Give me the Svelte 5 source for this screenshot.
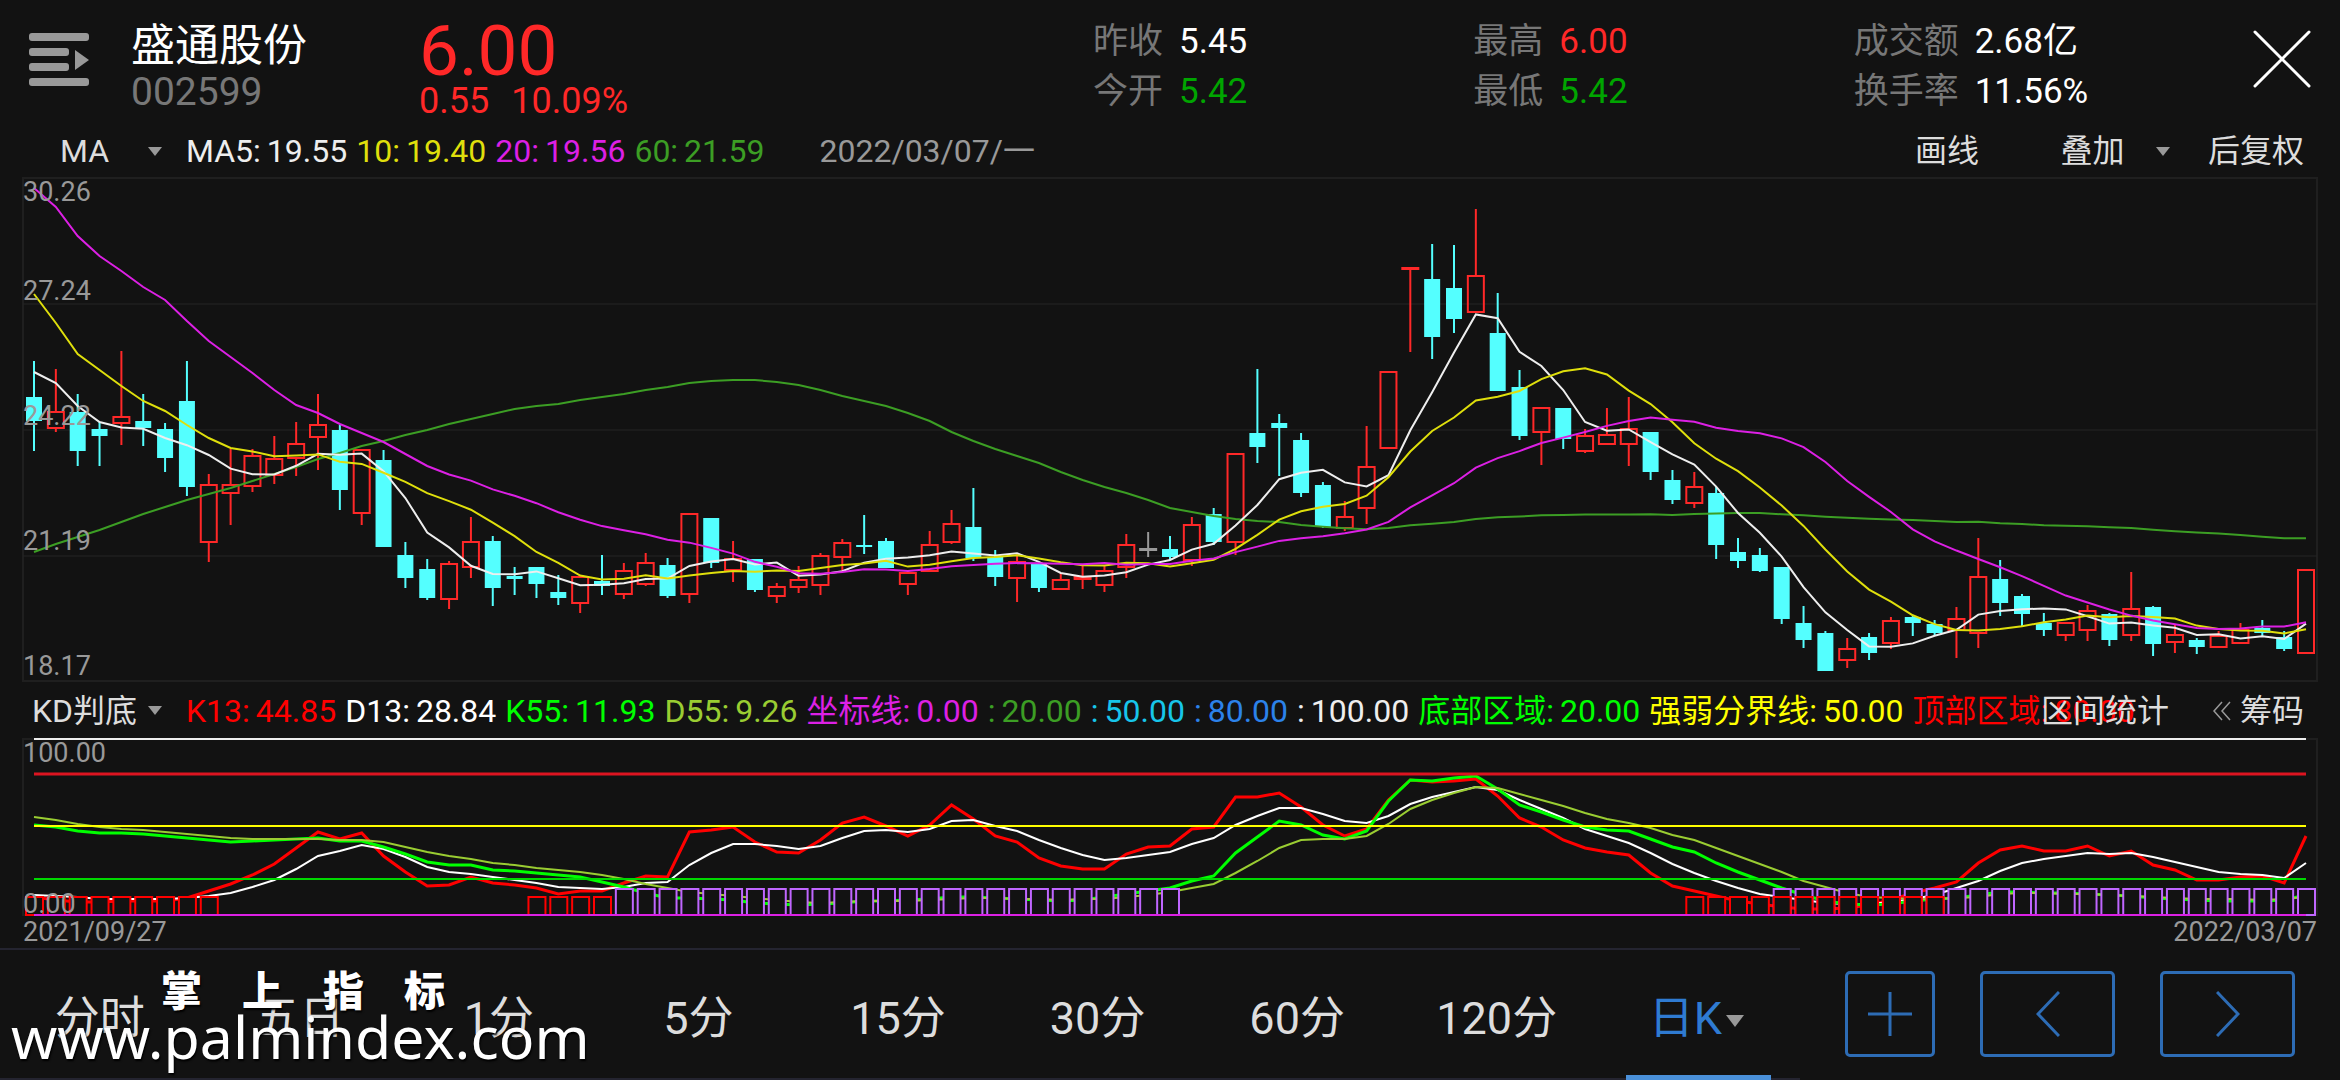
<script>
  let width = 2294;
  let activeTab = '日K';
  let mainIndicator = 'MA';
  let subIndicator = 'KD判底';

  const tabs = ['分时', '五日', '1分', '5分', '15分', '30分', '60分', '120分', '日K'];

  const stats = [
    { label: '昨收', value: '5.45', tone: 'plain' },
    { label: '最高', value: '6.00', tone: 'up' },
    { label: '成交额', value: '2.68亿', tone: 'plain' },
    { label: '今开', value: '5.42', tone: 'down' },
    { label: '最低', value: '5.42', tone: 'down' },
    { label: '换手率', value: '11.56%', tone: 'plain' }
  ];

  const maLegend = [
    { label: 'MA5:', value: '19.55', tone: 'white' },
    { label: '10:', value: '19.40', tone: 'gold' },
    { label: '20:', value: '19.56', tone: 'magenta' },
    { label: '60:', value: '21.59', tone: 'leaf' }
  ];

  const kdLegend = [
    { label: 'K13:', value: '44.85', tone: 'red' },
    { label: 'D13:', value: '28.84', tone: 'pure' },
    { label: 'K55:', value: '11.93', tone: 'lime' },
    { label: 'D55:', value: '9.26', tone: 'olive' },
    { label: '坐标线:', value: '0.00', tone: 'magenta' },
    { label: ':', value: '20.00', tone: 'leaf' },
    { label: ':', value: '50.00', tone: 'cyan' },
    { label: ':', value: '80.00', tone: 'blue' },
    { label: ':', value: '100.00', tone: 'white' },
    { label: '底部区域:', value: '20.00', tone: 'lime' },
    { label: '强弱分界线:', value: '50.00', tone: 'yellow' },
    { label: '顶部区域:', value: '80.00', tone: 'red' }
  ];

  // type, high, body top, body bottom, low (u = up, d = down, f = flat)
  const candles = `
    d 183 219 243 273,u 191 234 250 254,d 216 234 273 288,d 244 251 258 288,u 173 239 245 267,
    d 216 243 250 268,d 245 251 280 294,d 183 223 309 318,u 296 307 364 384,u 271 307 315 347,
    u 271 278 308 314,u 258 281 297 306,u 244 266 280 298,u 216 247 259 292,d 247 252 312 332,
    u 272 272 335 347,d 272 282 369 369,d 364 377 400 410,d 381 391 420 422,u 383 386 421 431,
    u 339 364 389 400,d 358 363 410 428,d 389 398 401 417,d 389 389 406 420,d 397 414 420 427,
    u 399 399 425 435,d 377 403 408 417,u 385 393 416 421,u 375 385 406 408,d 380 387 418 420,
    u 336 336 416 425,d 340 340 385 390,u 363 381 392 404,d 381 381 412 414,u 405 409 418 425,
    u 388 402 409 415,u 375 378 407 417,u 361 365 379 394,d 337 367 369 376,d 360 363 390 390,
    u 392 395 406 417,u 353 367 393 393,u 332 346 364 366,d 310 349 380 383,d 372 379 399 408,
    u 376 384 400 424,d 385 385 410 414,u 395 402 411 412,u 387 399 401 411,u 387 393 407 414,
    u 356 367 389 400,f 354 371 372 379,d 358 371 379 382,u 339 347 382 388,d 330 336 364 367,
    u 276 276 364 377,d 191 255 269 285,d 236 245 250 298,d 255 262 315 319,d 304 307 349 350,
    u 323 339 350 353,u 248 289 330 346,u 194 194 270 270,u 90 90 91 174,d 66 101 159 181,
    d 67 110 141 155,u 31 98 134 134,d 115 155 213 213,d 192 209 258 262,u 230 230 254 287,
    d 230 230 261 271,u 251 258 273 275,u 230 257 266 266,u 219 251 266 288,d 254 254 294 302,
    d 292 302 322 326,u 294 309 325 330,d 309 315 367 381,d 360 374 383 390,d 370 377 393 394,
    d 389 389 441 446,d 428 445 462 470,d 453 455 493 493,u 460 471 482 490,d 455 459 475 482,
    u 439 443 465 471,d 437 439 445 458,d 442 446 455 458,u 429 441 452 480,u 360 399 455 470,
    d 382 401 425 438,d 416 418 436 448,d 435 445 452 458,u 444 445 457 463,u 427 433 452 463,
    d 435 436 462 468,u 394 431 457 463,d 428 429 466 478,u 446 457 464 475,d 460 462 469 476,
    u 453 458 469 470,u 445 452 465 466,d 442 450 455 458,d 453 459 471 473,u 392 392 475 475`
    .trim()
    .split(',')
    .map((row) => {
      const [type, high, top, bottom, low] = row.trim().split(' ');
      return { type, high: +high, top: +top, bottom: +bottom, low: +low };
    });

  const closes = candles.map((c) => (c.type === 'u' ? c.top : c.bottom));

  // the first n - 1 points need days before the window, so they come as a seed
  function average(n, seed) {
    return closes.map((_, i) => {
      if (i < seed.length) return seed[i];
      const days = closes.slice(i - n + 1, i + 1);
      return days.reduce((sum, y) => sum + y, 0) / n;
    });
  }

  const averages = [
    { tone: 'leaf', points: average(60, [
      374, 366, 359, 352, 344, 336, 329, 322, 316, 310, 303, 296, 289, 281, 275, 268, 263, 257, 252, 246,
      241, 236, 231, 228, 226, 222, 219, 216, 212, 209, 205, 203, 202, 202, 204, 207, 212, 218, 223, 228,
      235, 243, 254, 263, 271, 278, 285, 294, 302, 309, 315, 322, 330, 334, 338, 341, 343, 344, 347
    ]) },
    { tone: 'white', points: average(5, [194, 205, 228, 244]) },
    { tone: 'gold', points: average(10, [116, 145, 176, 192, 208, 223, 233, 247, 260]) },
    { tone: 'magenta', points: average(20, [10, 29, 58, 78, 93, 109, 122, 143, 163, 179, 195, 212, 227, 235, 246, 255, 264, 276, 288]) }
  ];

  const kdLines = [
    { tone: 'red', thick: true, points: [
      158, 161, 163, 163, 162, 162, 162, 159, 152, 145, 136, 125, 109, 93, 100, 94, 117, 133, 147, 146,
      138, 144, 146, 149, 155, 152, 152, 144, 137, 138, 93, 91, 88, 103, 113, 114, 101, 84, 78, 87,
      97, 86, 66, 80, 97, 103, 119, 127, 130, 130, 115, 108, 107, 90, 88, 58, 58, 54, 68, 86,
      97, 90, 61, 41, 43, 42, 40, 57, 79, 88, 101, 109, 113, 116, 134, 147, 152, 157, 162, 165,
      168, 170, 170, 169, 166, 161, 154, 149, 143, 124, 111, 107, 112, 112, 107, 117, 112, 126, 131, 141,
      141, 138, 137, 144, 97
    ] },
    { tone: 'pure', thick: false, points: [
      156, 157, 158, 160, 160, 160, 160, 159, 157, 154, 148, 141, 130, 117, 112, 106, 110, 118, 128, 133,
      135, 138, 141, 144, 148, 149, 150, 148, 144, 143, 126, 114, 105, 105, 107, 110, 107, 99, 92, 91,
      93, 90, 82, 81, 87, 92, 101, 109, 116, 121, 119, 116, 113, 105, 99, 86, 77, 69, 69, 75,
      82, 84, 77, 65, 58, 53, 48, 51, 61, 70, 79, 90, 97, 104, 114, 125, 134, 142, 149, 155,
      158, 161, 164, 165, 165, 163, 160, 156, 149, 142, 132, 124, 120, 117, 114, 115, 114, 118, 123, 128,
      133, 135, 136, 139, 124
    ] },
    { tone: 'lime', thick: true, points: [
      86, 88, 92, 94, 94, 95, 97, 99, 101, 103, 102, 101, 100, 99, 102, 102, 108, 115, 123, 126,
      126, 131, 132, 134, 136, 138, 143, 148, 154, 159, 159, 160, 161, 164, 165, 166, 165, 164, 162, 162,
      161, 160, 158, 158, 159, 160, 161, 162, 161, 158, 155, 152, 149, 142, 137, 114, 98, 82, 86, 96,
      100, 92, 62, 41, 42, 39, 37, 50, 66, 73, 81, 88, 91, 92, 100, 108, 113, 124, 133, 141,
      149, 156, 162, 165, 166, 165, 162, 160, 159, 156, 153, 153, 154, 154, 155, 156, 157, 159, 160, 161,
      162, 162, 162, 161, 156
    ] },
    { tone: 'olive', thick: false, points: [
      78, 81, 85, 88, 90, 91, 93, 95, 97, 99, 100, 100, 100, 100, 101, 101, 103, 108, 113, 117,
      120, 124, 126, 129, 131, 133, 136, 140, 145, 149, 153, 155, 157, 159, 161, 163, 164, 163, 162, 162,
      162, 161, 160, 159, 159, 160, 160, 161, 160, 160, 158, 156, 153, 149, 145, 134, 122, 109, 101, 100,
      100, 97, 85, 70, 61, 54, 48, 49, 55, 61, 67, 74, 80, 84, 89, 96, 101, 109, 117, 125,
      133, 142, 148, 154, 158, 159, 160, 160, 159, 158, 155, 154, 154, 155, 155, 156, 157, 158, 159, 160,
      160, 160, 161, 160, 158
    ] }
  ];

  const levels = [
    { y: 35, tone: 'top' },
    { y: 87, tone: 'yellow' },
    { y: 140, tone: 'bottom' }
  ];

  const range = (from, to) => Array.from({ length: to - from + 1 }, (_, i) => from + i);
  const purpleBars = [...range(27, 52), ...range(80, 104)];
  const redBars = [...range(0, 8), ...range(23, 26), ...range(76, 87)];

  const prices = [
    { text: '30.26', y: 23 },
    { text: '27.24', y: 122 },
    { text: '24.22', y: 247 },
    { text: '21.19', y: 372 },
    { text: '18.17', y: 497 }
  ];

  $: step = (width - 22) / (candles.length - 1);
  $: x = (i) => 11 + i * step;
  $: path = (points) => points.map((y, i) => `${x(i)},${y}`).join(' ');
</script>

<main>
  <header>
    <button class="menu" aria-label="列表">
      <svg width="60" height="54" viewBox="0 0 60 54" fill="#999">
        <rect width="60" height="8" rx="3" />
        <rect y="15" width="40" height="8" rx="3" />
        <rect y="30" width="40" height="8" rx="3" />
        <rect y="45" width="60" height="8" rx="3" />
        <path d="M46 17l14 10-14 10z" />
      </svg>
    </button>
    <div class="name">
      <h1>盛通股份</h1>
      <span>002599</span>
    </div>
    <div class="quote">
      <strong>6.00</strong>
      <div class="change"><span>0.55</span><span>10.09%</span></div>
    </div>
    <dl class="stats">
      {#each stats as stat}
        <div>
          <dt>{stat.label}</dt>
          <dd class={stat.tone}>{stat.value}</dd>
        </div>
      {/each}
    </dl>
    <button class="close" aria-label="关闭">
      <svg width="58" height="58" viewBox="0 0 58 58" stroke="#fff" stroke-width="3" stroke-linecap="round">
        <path d="M2 2l54 54M56 2L2 56" />
      </svg>
    </button>
  </header>

  <div class="bar">
    <div class="picker">
      <select aria-label="主图指标" bind:value={mainIndicator}>
        <option>MA</option>
      </select>
      <i class="arrow"></i>
    </div>
    <div class="legend">
      {#each maLegend as item}
        <span class={item.tone}><b>{item.label}</b>{item.value}</span>
      {/each}
      <time>2022/03/07/一</time>
    </div>
    <div class="actions">
      <button>画线</button>
      <div class="picker overlay">
        <select aria-label="叠加">
          <option>叠加</option>
        </select>
        <i class="arrow"></i>
      </div>
      <button>后复权</button>
    </div>
  </div>

  <div class="plot" bind:clientWidth={width}>
    <svg {width} height="504">
      <rect class="frame" x="0" y="0" {width} height="503" />
      {#each [126, 252, 378] as y}
        <line class="grid" x1="0" x2={width} y1={y} y2={y} />
      {/each}
      {#each candles as c, i}
        <g class={'candle-' + c.type}>
          {#if c.type === 'u'}
            <line x1={x(i)} x2={x(i)} y1={c.high} y2={c.top} />
            <line x1={x(i)} x2={x(i)} y1={c.bottom} y2={c.low} />
            <rect x={x(i) - 8} y={c.top} width="16" height={c.bottom - c.top} />
          {:else}
            <line x1={x(i)} x2={x(i)} y1={c.high} y2={c.low} />
            <rect x={x(i) - 8} y={c.top} width="16" height={c.bottom - c.top} />
          {/if}
        </g>
      {/each}
      {#each averages as line}
        <polyline class={line.tone} points={path(line.points)} />
      {/each}
      {#each prices as price}
        <text x="0" y={price.y}>{price.text}</text>
      {/each}
    </svg>
  </div>

  <div class="bar">
    <div class="picker">
      <select aria-label="副图指标" bind:value={subIndicator}>
        <option>KD判底</option>
      </select>
      <i class="arrow"></i>
    </div>
    <div class="legend">
      {#each kdLegend as item}
        <span class={item.tone}><b>{item.label}</b>{item.value}</span>
      {/each}
    </div>
    <div class="actions">
      <button>区间统计</button>
      <button class="chips">
        <svg width="18" height="20" viewBox="0 0 18 20" fill="none" stroke="#999" stroke-width="1.5">
          <path d="M9 1L1 10l8 9M17 1L9 10l8 9" />
        </svg>
        筹码
      </button>
    </div>
  </div>

  <div class="plot">
    <svg {width} height="178">
      <rect class="frame" x="0" y="0" {width} height="176" />
      {#each kdLines as line}
        <polyline class={line.tone} class:thick={line.thick} points={path(line.points)} />
      {/each}
      <line class="level-full" x1={x(0)} x2={x(104)} y1="0" y2="0" />
      {#each levels as level}
        <line class={'level ' + level.tone} x1={x(0)} x2={x(104)} y1={level.y} y2={level.y} />
      {/each}
      {#each purpleBars as i}
        <rect class="bar-purple" x={x(i) - 8} y="150" width="17" height="26" />
      {/each}
      {#each redBars as i}
        <rect class="bar-red" x={x(i) - 8} y="158" width="17" height="18" />
      {/each}
      <line class="level magenta" x1={x(0)} x2={x(104)} y1="176" y2="176" />
      <text x="0" y="23">100.00</text>
      <text x="0" y="174">0.00</text>
    </svg>
    <div class="dates">
      <time>2021/09/27</time>
      <time>2022/03/07</time>
    </div>
  </div>

  <footer>
    <nav>
      {#each tabs as tab}
        <button class:active={tab === activeTab} on:click={() => (activeTab = tab)}>
          {tab}{#if tab === '日K'}<i class="arrow big"></i>{/if}
        </button>
      {/each}
    </nav>
    <div class="zoom">
      <button class="add" aria-label="添加">
        <svg width="46" height="44" viewBox="0 0 46 44"><path d="M1 22h44M23 0v44" /></svg>
      </button>
      <button aria-label="上一个">
        <svg width="24" height="46" viewBox="0 0 24 46"><path d="M23 1L2 23l21 22" /></svg>
      </button>
      <button aria-label="下一个">
        <svg width="24" height="46" viewBox="0 0 24 46"><path d="M1 1l21 22L1 45" /></svg>
      </button>
    </div>
    <div class="watermark">
      <p class="brand"><span>掌</span><span>上</span><span>指</span><span>标</span></p>
      <p class="site">www.palmindex.com</p>
    </div>
  </footer>
</main>

<style>
  :global(body) {
    background: #121212;
  }
  main {
    font-family: Roboto, 'Noto Sans CJK SC', sans-serif;
    font-size: 32px;
    color: #ddd;
    background: #121212;
    overflow: hidden;
  }
  button,
  select {
    font: inherit;
    color: inherit;
    background: none;
    border: 0;
    padding: 0;
    margin: 0;
    cursor: pointer;
  }
  svg {
    display: block;
  }
  h1,
  p,
  dl,
  dd {
    margin: 0;
  }

  header {
    display: flex;
    height: 124px;
    padding: 0 29px;
  }
  .menu {
    width: 102px;
    padding-top: 33px;
    align-self: flex-start;
  }
  .name {
    width: 288px;
    padding-top: 20px;
  }
  h1 {
    font-size: 44px;
    font-weight: 400;
    line-height: 52px;
    color: #fff;
  }
  .name span {
    display: block;
    font-size: 39px;
    line-height: 40px;
    color: #777;
  }
  .quote {
    flex: 1;
    padding-top: 15px;
    color: #ff2828;
  }
  .quote strong {
    display: block;
    font-size: 71px;
    font-weight: 400;
    line-height: 72px;
  }
  .change {
    display: flex;
    gap: 22px;
    font-size: 36px;
    line-height: 28px;
  }
  .stats {
    display: grid;
    grid-template-columns: repeat(3, 1fr);
    width: 50%;
    margin-right: 19px;
    padding-top: 17px;
    align-content: start;
    font-size: 35px;
    line-height: 50px;
  }
  .stats div {
    display: flex;
    gap: 16px;
  }
  dt {
    color: #777;
  }
  .plain {
    color: #fff;
  }
  .up {
    color: #ff2828;
  }
  .down {
    color: #00a500;
  }
  .close {
    width: 58px;
    padding-top: 30px;
    align-self: flex-start;
  }

  .bar {
    display: flex;
    align-items: center;
    height: 54px;
    padding: 0 36px 0 23px;
    line-height: 46px;
    white-space: nowrap;
  }
  .bar ~ .bar {
    height: 57px;
  }
  .picker {
    display: flex;
    align-items: center;
    gap: 2px;
    margin-right: 24px;
  }
  select {
    appearance: none;
    width: 123px;
    text-align-last: center;
  }
  .arrow {
    border: 7px solid transparent;
    border-top: 9px solid #999;
    border-bottom: 0;
  }
  .legend {
    display: flex;
    align-items: baseline;
    gap: 9px;
    flex: 1;
    min-width: 0;
  }
  .legend b {
    font-weight: 400;
    margin-right: 6px;
  }
  .legend time {
    margin-left: 46px;
    color: #999;
  }
  .actions {
    display: flex;
    align-items: center;
    gap: 44px;
  }
  .overlay {
    margin: 0 -6px 0 8px;
  }
  .chips {
    display: flex;
    align-items: center;
    gap: 9px;
  }

  .white {
    color: #eee;
    stroke: #eee;
  }
  .pure {
    color: #fff;
    stroke: #fff;
  }
  .gold {
    color: #dfdf0c;
    stroke: #dfdf0c;
  }
  .yellow {
    color: #ff0;
    stroke: #ff0;
  }
  .magenta {
    color: #dc20e4;
    stroke: #dc20e4;
  }
  .leaf {
    color: #3c9e24;
    stroke: #3c9e24;
  }
  .red {
    color: #f00;
    stroke: #f00;
  }
  .lime {
    color: #0f0;
    stroke: #0f0;
  }
  .olive {
    color: #9acd32;
    stroke: #9acd32;
  }
  .cyan {
    color: #17c5ea;
  }
  .blue {
    color: #2c82ea;
  }
  .legend span {
    stroke: none;
  }

  .plot {
    margin: 0 23px;
  }
  .plot svg {
    overflow: visible;
  }
  .frame {
    fill: none;
    stroke: #1f1f1f;
    stroke-width: 2;
  }
  .grid {
    stroke: #252525;
    stroke-width: 1;
  }
  polyline {
    fill: none;
    stroke-width: 2;
  }
  .thick {
    stroke-width: 3;
  }
  text {
    font-size: 27px;
    fill: #999;
  }
  .candle-u {
    fill: none;
    stroke: #ff2828;
    stroke-width: 2;
  }
  .candle-d {
    fill: #54ffff;
    stroke: #54ffff;
    stroke-width: 2;
  }
  .candle-d rect {
    stroke: none;
  }
  .candle-f {
    fill: #999;
    stroke: #999;
    stroke-width: 2;
  }
  .level-full {
    stroke: #eee;
    stroke-width: 2;
  }
  .level {
    stroke-width: 2;
  }
  .top {
    stroke: #dc1420;
    stroke-width: 3;
  }
  .bottom {
    stroke: #00d800;
  }
  .bar-purple {
    fill: #121212;
    stroke: #c066ff;
    stroke-width: 2;
  }
  .bar-red {
    fill: #121212;
    stroke: #f00;
    stroke-width: 2;
  }
  .dates {
    display: flex;
    justify-content: space-between;
    height: 31px;
    font-size: 27px;
    line-height: 30px;
    color: #999;
  }

  footer {
    position: relative;
    display: flex;
    height: 132px;
  }
  nav {
    display: flex;
    flex: 0 0 1800px;
    box-sizing: border-box;
    border-top: 2px solid #242430;
    border-bottom: 2px solid #242430;
  }
  nav button {
    display: flex;
    flex: 1;
    align-items: center;
    justify-content: center;
    position: relative;
    font-size: 45px;
  }
  nav .active {
    padding-right: 4px;
    color: #2f7bd2;
  }
  nav .active::after {
    content: '';
    position: absolute;
    left: 29px;
    right: 29px;
    bottom: -2px;
    height: 5px;
    background: #4a90d9;
  }
  .big {
    border-width: 12px 9px 0;
    margin: 14px 0 0 4px;
  }
  .zoom {
    display: flex;
    flex: 1;
    align-items: center;
    justify-content: space-between;
    padding: 0 45px;
  }
  .zoom button {
    display: flex;
    align-items: center;
    justify-content: center;
    box-sizing: border-box;
    width: 135px;
    height: 86px;
    border: 3px solid #2d6cb5;
    border-radius: 5px;
  }
  .zoom .add {
    width: 90px;
  }
  .zoom svg {
    fill: none;
    stroke: #2d6cb5;
    stroke-width: 3;
  }
  .watermark {
    position: absolute;
    left: 11px;
    top: 19px;
    color: #fff;
    text-shadow: 1px 2px 2px #000;
    pointer-events: none;
  }
  .brand {
    display: flex;
    gap: 40px;
    padding-left: 150px;
    font-size: 41px;
    font-weight: 900;
    line-height: 50px;
  }
  .site {
    font-family: 'Noto Sans', sans-serif;
    font-size: 59px;
    line-height: 38px;
  }
</style>
